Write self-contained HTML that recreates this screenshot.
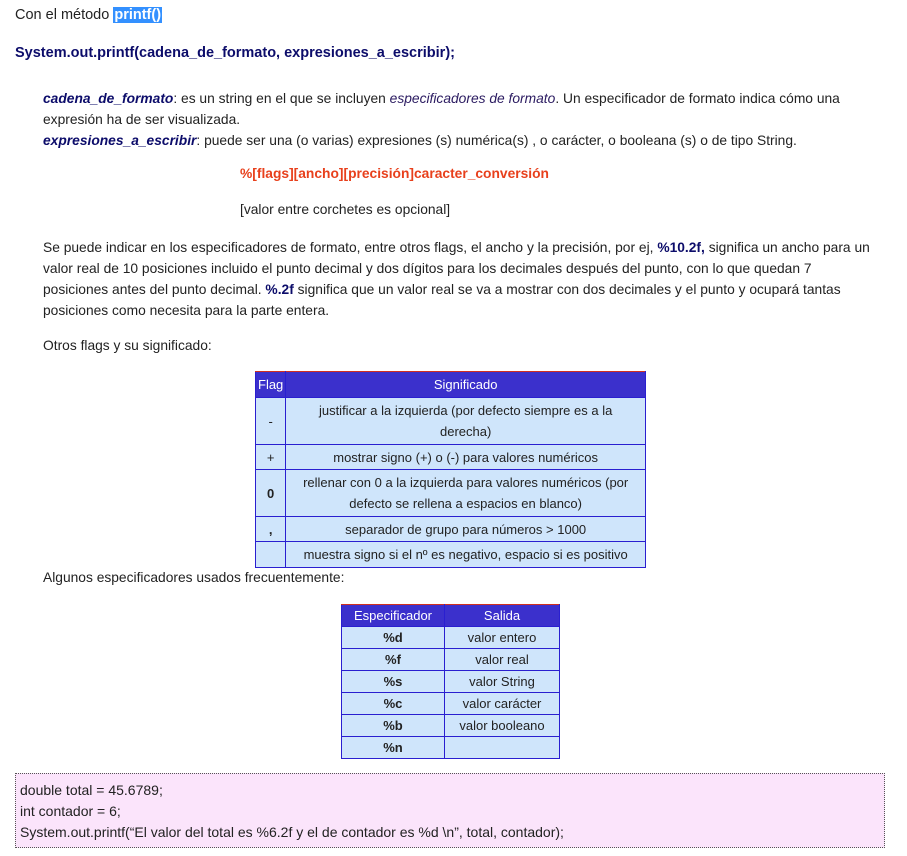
<!DOCTYPE html>
<html><head><meta charset="utf-8"><style>
body{margin:0;width:907px;height:856px;background:#fff;font-family:"Liberation Sans",sans-serif;font-size:13.8px;color:#222;position:relative;overflow:hidden}
.a{position:absolute;white-space:nowrap}
.nv{color:#0c0c6a;font-weight:bold}
table{position:absolute;border-collapse:collapse;background:#cfe5fb;font-size:13px;color:#222}
td,th{border:1px solid #2a1fd0;text-align:center;padding:0 4px}
th{background:#3b30cc;color:#fff;font-weight:normal;border-color:#2a1fd0;border-top:1px solid #d03020}
</style></head><body>
<div class="a" style="left:15px;top:7px;font-size:14.5px">Con el método <span style="background:#3390ff;color:#fff;font-weight:bold;padding:0 1px">printf()</span></div>
<div class="a nv" style="left:15px;top:45px;font-size:14.5px">System.out.printf(cadena_de_formato, expresiones_a_escribir);</div>
<div class="a" style="left:43px;top:88px;line-height:21px"><i class="nv">cadena_de_formato</i>: es un string en el que se incluyen <i style="color:#2a1a60">especificadores de formato</i>. Un especificador de formato indica cómo una<br>expresión ha de ser visualizada.<br><i class="nv">expresiones_a_escribir</i>: puede ser una (o varias) expresiones (s) numérica(s) , o carácter, o booleana (s) o de tipo String.</div>
<div class="a" style="left:240px;top:166px;color:#e8401c;font-weight:bold">%[flags][ancho][precisión]caracter_conversión</div>
<div class="a" style="left:240px;top:202px">[valor entre corchetes es opcional]</div>
<div class="a" style="left:43px;top:237px;line-height:21px">Se puede indicar en los especificadores de formato, entre otros flags, el ancho y la precisión, por ej, <b class="nv">%10.2f,</b> significa un ancho para un<br>valor real de 10 posiciones incluido el punto decimal y dos dígitos para los decimales después del punto, con lo que quedan 7<br>posiciones antes del punto decimal. <b class="nv">%.2f</b> significa que un valor real se va a mostrar con dos decimales y el punto y ocupará tantas<br>posiciones como necesita para la parte entera.</div>
<div class="a" style="left:43px;top:338px">Otros flags y su significado:</div>
<table style="left:255px;top:371px;width:391px;line-height:21px">
<tr style="height:26px"><th style="width:22px;padding:0 2px">Flag</th><th>Significado</th></tr>
<tr style="height:47px"><td>-</td><td>justificar a la izquierda (por defecto siempre es a la<br>derecha)</td></tr>
<tr style="height:25px"><td>+</td><td>mostrar signo (+) o (-) para valores numéricos</td></tr>
<tr style="height:47px"><td><b>0</b></td><td>rellenar con 0 a la izquierda para valores numéricos (por<br>defecto se rellena a espacios en blanco)</td></tr>
<tr style="height:25px"><td><b>,</b></td><td>separador de grupo para números &gt; 1000</td></tr>
<tr style="height:26px"><td></td><td>muestra signo si el nº es negativo, espacio si es positivo</td></tr>
</table>
<div class="a" style="left:43px;top:570px">Algunos especificadores usados frecuentemente:</div>
<table style="left:341px;top:604px;width:219px;line-height:20px">
<tr style="height:22px"><th style="width:94px">Especificador</th><th>Salida</th></tr>
<tr style="height:22px"><td><b>%d</b></td><td>valor entero</td></tr>
<tr style="height:22px"><td><b>%f</b></td><td>valor real</td></tr>
<tr style="height:22px"><td><b>%s</b></td><td>valor String</td></tr>
<tr style="height:22px"><td><b>%c</b></td><td>valor carácter</td></tr>
<tr style="height:22px"><td><b>%b</b></td><td>valor booleano</td></tr>
<tr style="height:22px"><td><b>%n</b></td><td></td></tr>
</table>
<div class="a" style="left:15px;top:773px;width:870px;background:#fbe4fb;border:1px dotted #555;padding:0 0 0 4px;line-height:21px;font-size:14px;color:#222;padding-top:6px;box-sizing:border-box;height:75px">double total = 45.6789;<br>int contador = 6;<br>System.out.printf(“El valor del total es %6.2f y el de contador es %d \n”, total, contador);</div>
</body></html>
